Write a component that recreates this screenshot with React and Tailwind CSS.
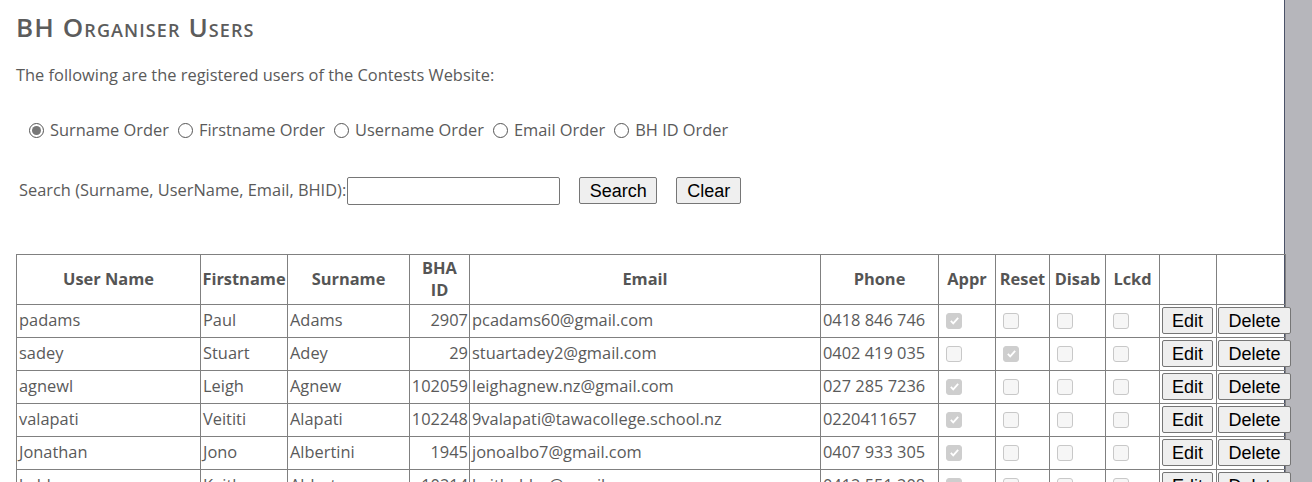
import { useState } from 'react'

const users = [
  { user: 'padams', first: 'Paul', last: 'Adams', id: 2907, email: 'pcadams60@gmail.com', phone: '0418 846 746', appr: true, reset: false },
  { user: 'sadey', first: 'Stuart', last: 'Adey', id: 29, email: 'stuartadey2@gmail.com', phone: '0402 419 035', appr: false, reset: true },
  { user: 'agnewl', first: 'Leigh', last: 'Agnew', id: 102059, email: 'leighagnew.nz@gmail.com', phone: '027 285 7236', appr: true, reset: false },
  { user: 'valapati', first: 'Veititi', last: 'Alapati', id: 102248, email: '9valapati@tawacollege.school.nz', phone: '0220411657', appr: true, reset: false },
  { user: 'Jonathan', first: 'Jono', last: 'Albertini', id: 1945, email: 'jonoalbo7@gmail.com', phone: '0407 933 305', appr: true, reset: false },
  { user: 'kalder', first: 'Keith', last: 'Alderton', id: 10214, email: 'keithalder@gmail.com', phone: '0412 551 208', appr: true, reset: false },
]

const orders = ['Surname Order', 'Firstname Order', 'Username Order', 'Email Order', 'BH ID Order']

function Box({ checked }) {
  return (
    <div className={`ml-[5px] w-[16px] h-[16px] rounded-[3px] border flex items-center justify-center ${checked ? 'bg-[#cecece] border-[#cecece]' : 'bg-[#f6f6f6] border-[#c8c8c8]'}`}>
      {checked && (
        <svg width="11" height="11" viewBox="0 0 12 12">
          <path d="M2 6.5l2.6 2.6L10 3.2" stroke="#fff" strokeWidth="2" fill="none" />
        </svg>
      )}
    </div>
  )
}

function Btn({ children, w }) {
  return (
    <button className={`${w} h-[27px] bg-[#efefef] border border-[#767676] rounded-[2px] text-[18px] leading-none text-black font-['Liberation_Sans',Arial,sans-serif]`}>
      {children}
    </button>
  )
}

export default function App() {
  const [order, setOrder] = useState(0)
  const th = 'border border-[#808080] font-bold text-[#555] text-center leading-[22px]'
  const td = 'border border-[#808080] px-[2px] h-[33px] whitespace-nowrap'

  return (
    <div className="flex min-h-[482px] bg-[#b6b6bb] font-['Open_Sans',sans-serif] text-[16.4px] text-[#5a5a5a]">
      <div className="w-[1285px] shrink-0 bg-white border-r border-[#4b5268] pl-[16px] pt-[11px]">
        <h1 className="text-[26px] font-semibold text-[#5c5c5c] [font-variant:small-caps] leading-[32px] tracking-[1.1px]">
          BH Organiser Users
        </h1>
        <p className="mt-[21px] leading-[22px]">The following are the registered users of the Contests Website:</p>

        <div className="mt-[32px] ml-[13px] flex items-center">
          {orders.map((o, i) => (
            <label key={o} className="flex items-center mr-[9px] cursor-pointer" onClick={() => setOrder(i)}>
              <span className="w-[15px] h-[15px] rounded-full border border-[#555] flex items-center justify-center mr-[6px]">
                {order === i && <span className="w-[9px] h-[9px] rounded-full bg-[#777]" />}
              </span>
              {o}
            </label>
          ))}
        </div>

        <div className="mt-[34px] ml-[3px] flex items-center">
          <span className="mr-[1px]">Search (Surname, UserName, Email, BHID):</span>
          <input className="w-[213px] h-[28px] border border-[#767676] rounded-[2px] outline-none px-1" />
          <div className="ml-[19px]"><Btn w="w-[78px]">Search</Btn></div>
          <div className="ml-[19px]"><Btn w="w-[65px]">Clear</Btn></div>
        </div>

        <table className="mt-[49px] border-collapse table-fixed w-[1269px] border border-[#808080]">
          <colgroup>
            <col className="w-[184px]" />
            <col className="w-[87px]" />
            <col className="w-[122px]" />
            <col className="w-[60px]" />
            <col className="w-[351px]" />
            <col className="w-[118px]" />
            <col className="w-[57px]" />
            <col className="w-[54px]" />
            <col className="w-[56px]" />
            <col className="w-[54px]" />
            <col className="w-[57px]" />
            <col className="w-[69px]" />
          </colgroup>
          <thead>
            <tr className="h-[50px]">
              <th className={th}>User Name</th>
              <th className={th}>Firstname</th>
              <th className={th}>Surname</th>
              <th className={th}>BHA<br />ID</th>
              <th className={th}>Email</th>
              <th className={th}>Phone</th>
              <th className={th}>Appr</th>
              <th className={th}>Reset</th>
              <th className={th}>Disab</th>
              <th className={th}>Lckd</th>
              <th className={th}></th>
              <th className={th}></th>
            </tr>
          </thead>
          <tbody>
            {users.map((u) => (
              <tr key={u.user}>
                <td className={td}>{u.user}</td>
                <td className={td}>{u.first}</td>
                <td className={td}>{u.last}</td>
                <td className={`${td} text-right !px-[1px]`}>{u.id}</td>
                <td className={td}>{u.email}</td>
                <td className={td}>{u.phone}</td>
                <td className={td}><Box checked={u.appr} /></td>
                <td className={td}><Box checked={u.reset} /></td>
                <td className={td}><Box checked={false} /></td>
                <td className={td}><Box checked={false} /></td>
                <td className={`${td} !px-[2px]`}><Btn w="w-[51px]">Edit</Btn></td>
                <td className={`${td} !px-[1px] overflow-visible`}><Btn w="w-[73px]">Delete</Btn></td>
              </tr>
            ))}
          </tbody>
        </table>
      </div>
    </div>
  )
}
